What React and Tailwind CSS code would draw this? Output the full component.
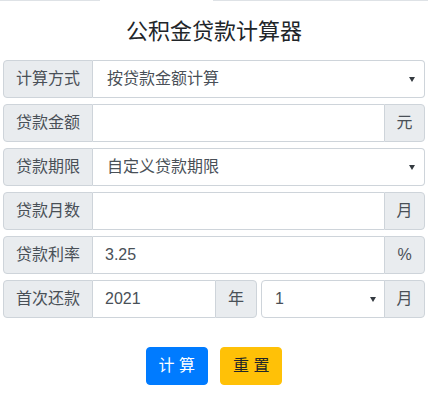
import { useState } from 'react';

const font = { fontFamily: '"Liberation Sans", "Noto Sans CJK SC", sans-serif' };

const Arrow = () => (
  <svg width="6" height="5" viewBox="0 0 6 5" className="shrink-0">
    <path d="M0 0 H6 L3 5 Z" fill="#343a40" />
  </svg>
);

const Label = ({ children, className = '' }) => (
  <div className={`flex items-center px-3 border border-[#ced4da] bg-[#e9ecef] text-[#495057] whitespace-nowrap ${className}`}>
    {children}
  </div>
);

// single-character addon on the right side
const Unit = ({ children, className = '' }) => (
  <div className={`flex items-center justify-center w-[41px] shrink-0 border border-[#ced4da] bg-[#e9ecef] text-[#495057] rounded-r ${className}`}>
    {children}
  </div>
);

const FakeSelect = ({ value, className = '' }) => (
  <div className={`flex flex-1 items-center justify-between bg-white text-[#495057] ${className}`}>
    <span>{value}</span>
    <Arrow />
  </div>
);

const TextBox = ({ value, onChange, className = '' }) => (
  <input
    type="text"
    value={value}
    onChange={(e) => onChange(e.target.value)}
    className={`flex-1 min-w-0 h-full bg-white px-3 text-[#495057] outline-none border-y border-[#ced4da] ${className}`}
  />
);

export default function App() {
  const [amount, setAmount] = useState('');
  const [months, setMonths] = useState('');
  const [rate, setRate] = useState('3.25');
  const [year, setYear] = useState('2021');

  return (
    <div className="w-[428px] h-[395px] bg-white text-base" style={font}>
      {/* tab bar bottom line */}
      <div className="flex h-px">
        <div className="w-[100px] bg-[#dee2e6]" />
        <div className="w-[113px]" />
        <div className="flex-1 bg-[#dee2e6]" />
      </div>

      <h4 className="mt-[18px] mb-[15px] h-[26px] leading-[26px] text-center text-[22px] text-[#212529]">
        公积金贷款计算器
      </h4>

      <div className="px-[3px] flex flex-col gap-[6px]">
        <div className="flex h-[38px]">
          <Label className="rounded-l">计算方式</Label>
          <FakeSelect value="按贷款金额计算" className="pl-[14px] pr-[9px] border-y border-r border-[#ced4da] rounded-r" />
        </div>

        <div className="flex h-[38px]">
          <Label className="rounded-l">贷款金额</Label>
          <TextBox value={amount} onChange={setAmount} />
          <Unit>元</Unit>
        </div>

        <div className="flex h-[38px]">
          <Label className="rounded-l">贷款期限</Label>
          <FakeSelect value="自定义贷款期限" className="pl-[14px] pr-[9px] border-y border-r border-[#ced4da] rounded-r" />
        </div>

        <div className="flex h-[38px]">
          <Label className="rounded-l">贷款月数</Label>
          <TextBox value={months} onChange={setMonths} />
          <Unit>月</Unit>
        </div>

        <div className="flex h-[38px]">
          <Label className="rounded-l">贷款利率</Label>
          <TextBox value={rate} onChange={setRate} />
          <Unit>%</Unit>
        </div>

        <div className="flex h-[38px] gap-[4px]">
          <div className="flex w-[254px]">
            <Label className="rounded-l">首次还款</Label>
            <TextBox value={year} onChange={setYear} />
            <Unit className="w-[42px]">年</Unit>
          </div>
          <div className="flex flex-1">
            <FakeSelect value="1" className="pl-[13px] pr-[8px] border border-[#ced4da] rounded-l" />
            <Unit className="-ml-px">月</Unit>
          </div>
        </div>
      </div>

      <div className="flex justify-center gap-3 mt-[29px]">
        <button className="h-[38px] px-3 border border-[#007bff] bg-[#007bff] text-white rounded">
          计 算
        </button>
        <button className="h-[38px] px-3 border border-[#ffc107] bg-[#ffc107] text-[#212529] rounded">
          重 置
        </button>
      </div>
    </div>
  );
}
